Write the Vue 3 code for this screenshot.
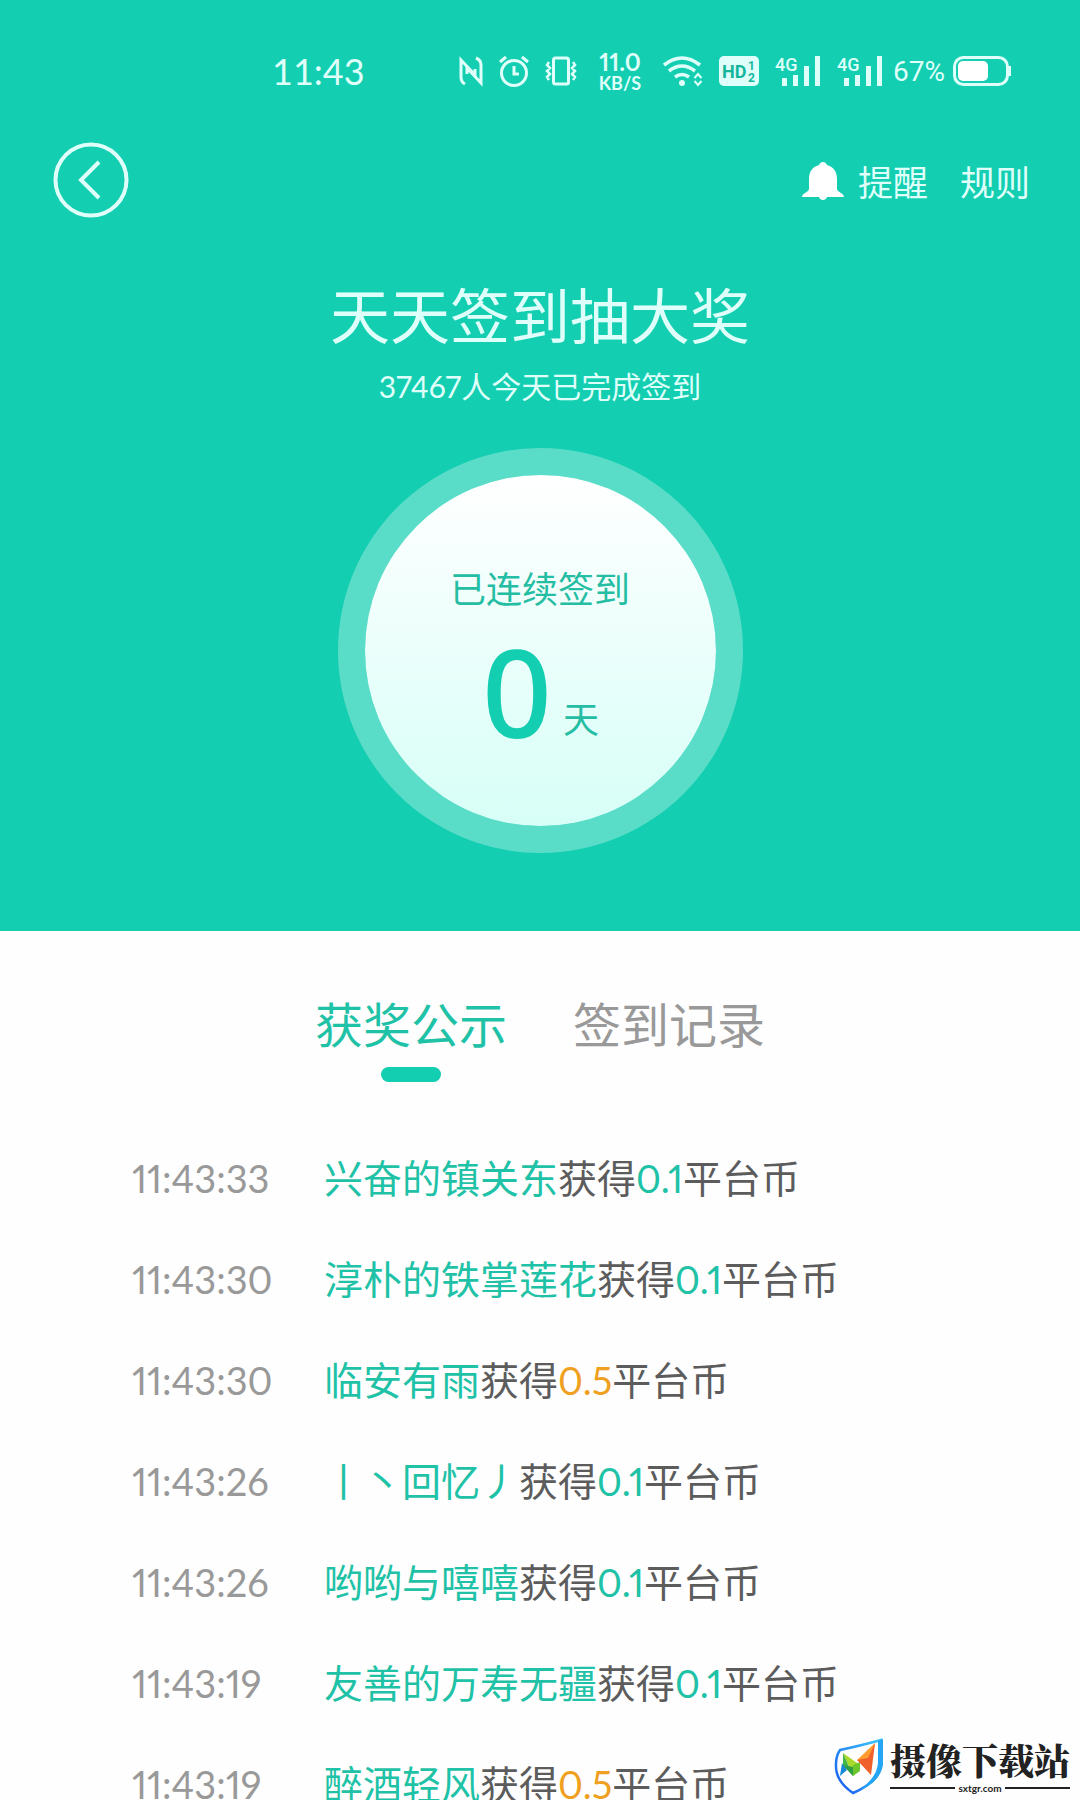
<script setup>
import { ref } from 'vue'

const tabs = ['获奖公示', '签到记录']
const active = ref(0)

const records = [
  { time: '11:43:33', name: '兴奋的镇关东', amount: '0.1' },
  { time: '11:43:30', name: '淳朴的铁掌莲花', amount: '0.1' },
  { time: '11:43:30', name: '临安有雨', amount: '0.5' },
  { time: '11:43:26', name: '丨丶回忆丿', amount: '0.1' },
  { time: '11:43:26', name: '哟哟与嘻嘻', amount: '0.1' },
  { time: '11:43:19', name: '友善的万寿无疆', amount: '0.1' },
  { time: '11:43:19', name: '醉酒轻风', amount: '0.5' },
]
</script>

<template>
  <div class="page">
    <header class="hero">
      <div class="status">
        <time class="clock">11:43</time>
        <div class="indicators">
          <svg width="24" height="32" viewBox="0 0 24 32" fill="none" stroke="currentColor" stroke-width="3">
            <path d="M6 29Q2 27 2 22V5L16 20V14" /><path d="M17 3Q22 5 22 10V28L8 13V19" />
          </svg>
          <svg width="30" height="32" viewBox="0 0 30 32" fill="none" stroke="currentColor" stroke-width="3">
            <circle cx="15" cy="18" r="12.500" /><path d="M15 11v8h5M1 7l6-5M29 7l-6-5" />
          </svg>
          <svg width="32" height="32" viewBox="0 0 32 32" fill="none" stroke="currentColor" stroke-width="3">
            <rect x="8.500" y="3" width="15" height="26" rx="2" />
            <path stroke-width="2.500" d="M4 7l-2 3 3 3-3 3 3 3-3 3 2 3M28 7l2 3-3 3 3 3-3 3 3 3-2 3" />
          </svg>
          <div class="speed"><span>11.0</span><small>KB/S</small></div>
          <svg width="40" height="32" viewBox="0 0 40 32" fill="none" stroke="currentColor" stroke-width="3.500">
            <path d="M1 10Q19-4 37 10M6 16Q19 6 32 16M12 22Q19 17 26 22" />
            <circle cx="19" cy="28" r="3" fill="currentColor" stroke="none" />
            <path d="M31.500 23l3.500-4 3.500 4M31.500 26l3.500 4 3.500-4" stroke-width="2" />
          </svg>
          <svg width="40" height="32" viewBox="0 0 40 32">
            <rect y="1" width="40" height="30" rx="5" fill="currentColor" />
            <text x="3" y="23" class="hd">HD</text>
            <text x="29" y="15" class="hd-num">1</text><text x="29" y="27" class="hd-num">2</text>
          </svg>
          <svg v-for="n in 2" :key="n" width="46" height="32" viewBox="0 0 46 32" fill="currentColor">
            <text x="0" y="16" class="net">4G</text>
            <path d="M7 23h5v8H7zM18 20h5v11h-5zM29 11h5v20h-5zM40 1h5v30h-5z" />
          </svg>
          <div class="power">
            <span>67%</span>
            <svg width="58" height="32" viewBox="0 0 58 32" fill="none" stroke="currentColor">
              <rect x="1.500" y="2.500" width="53" height="27" rx="9" stroke-width="3" />
              <rect x="5" y="6" width="30" height="20" rx="5" fill="#fff" stroke="none" />
              <path d="M57 11v10" stroke-width="2.500" />
            </svg>
          </div>
        </div>
      </div>

      <nav class="bar">
        <button class="back" aria-label="返回">
          <svg width="76" height="76" viewBox="0 0 76 76" fill="none" stroke="currentColor" stroke-width="4">
            <circle cx="38" cy="38" r="35.500" /><path d="M46 20L28 38l18 18" />
          </svg>
        </button>
        <div class="actions">
          <button>
            <svg width="42" height="40" viewBox="0 0 42 40" fill="currentColor">
              <path d="M21 0c2 0 3 1 4 3 7 2 10 7 10 14v10c0 3 7 4 7 8H25c-1 4-7 4-8 0H0c0-4 7-5 7-8V17c0-7 3-12 10-14 1-2 2-3 4-3z" />
            </svg>
            提醒
          </button>
          <button>规则</button>
        </div>
      </nav>

      <h1>天天签到抽大奖</h1>
      <p class="joined">37467人今天已完成签到</p>

      <section class="dial">
        <span>已连续签到</span>
        <p class="count"><strong>0</strong><span>天</span></p>
      </section>
    </header>

    <main>
      <div class="tabs" role="tablist">
        <button
          v-for="(tab, i) in tabs"
          :key="tab"
          role="tab"
          :aria-selected="active === i"
          :class="{ active: active === i }"
          @click="active = i"
        >{{ tab }}</button>
      </div>
      <ul class="records">
        <li v-for="(r, i) in records" :key="i">
          <time>{{ r.time }}</time>
          <p><span class="name">{{ r.name }}</span>获得<span class="amount" :class="{ high: r.amount === '0.5' }">{{ r.amount }}</span>平台币</p>
        </li>
      </ul>
    </main>

    <aside class="brand">
      <svg width="50" height="58" viewBox="0 0 50 58" fill="none">
        <defs>
          <linearGradient id="shield" x1="1" y1="0" x2="0" y2="1">
            <stop offset="0" stop-color="#3cc8fa" /><stop offset="1" stop-color="#1657f0" />
          </linearGradient>
        </defs>
        <path d="M6 12Q25 8 47 2L47 26Q45 44 19 55Q1 43 2 26Q2 18 6 12Z" stroke="url(#shield)" stroke-width="2.500" />
        <path d="M44 3l5-2v26q-3 17-23 25 17-13 18-27z" fill="#25a5f5" />
        <path d="M9 15l17 12-7 11z" fill="#a9d92a" /><path d="M9 15v12l10 11z" fill="#42b649" />
        <path d="M8 25l-2 13 7-6z" fill="#1689d8" />
        <path d="M9 27l10 2v9z" fill="#2f9e45" />
        <path d="M19 38V27l7-3v9z" fill="#6ec52c" />
        <path d="M41 5L23 22l14 3z" fill="#ff9d2e" /><path d="M41 5l-4 32-14-15 11-2z" fill="#f0602a" />
      </svg>
      <div>
        <b>摄像下载站</b>
        <small>sxtgr.com</small>
      </div>
    </aside>
  </div>
</template>

<style>
body {
  margin: 0;
}
</style>

<style scoped>
.page {
  position: relative;
  display: flex;
  flex-direction: column;
  height: 100vh;
  overflow: hidden;
  background: #fefefe;
  color: #5c5c5c;
  font-family: Lato, "Noto Sans CJK SC", sans-serif;
  font-variant-numeric: proportional-nums;
}
h1, p, ul {
  margin: 0;
  padding: 0;
}
svg {
  display: block;
  flex: none;
}
button {
  padding: 0;
  border: 0;
  background: none;
  color: inherit;
  font: inherit;
  cursor: pointer;
}
.hero {
  display: flex;
  flex-direction: column;
  align-items: center;
  flex: none;
  padding: 40px 0 78px;
  background: #13ceb1;
  color: #dffffa;
}
.status {
  display: flex;
  justify-content: space-between;
  align-items: center;
  align-self: stretch;
  height: 62px;
  padding: 0 69px 0 272px;
}
.clock {
  font-size: 36px;
  font-variant-numeric: tabular-nums;
}
.indicators {
  display: flex;
  align-items: center;
  gap: 16px;
}
.speed {
  display: flex;
  flex-direction: column;
  align-items: center;
  width: 54px;
  font-size: 24px;
  font-weight: 700;
  line-height: 24px;
}
.speed small {
  font-size: 18px;
  line-height: 18px;
}
.hd {
  font: 700 18px Roboto, sans-serif;
  fill: #15b59c;
}
.hd-num {
  font: 700 12px/12px Roboto, sans-serif;
  fill: #15b59c;
}
.net {
  font: 500 18px Roboto, sans-serif;
}
.power {
  display: flex;
  align-items: center;
  gap: 8px;
  margin-left: -6px;
  font: 28px Roboto, sans-serif;
}
.bar {
  display: flex;
  justify-content: space-between;
  align-items: center;
  align-self: stretch;
  height: 76px;
  margin-top: 40px;
  padding: 0 50px 0 53px;
}
.actions {
  display: flex;
  gap: 32px;
  padding-top: 4px;
  font-size: 35px;
  line-height: 40px;
}
.actions button {
  display: flex;
  align-items: center;
  gap: 14px;
}
.actions svg {
  color: #fff;
}
h1 {
  margin-top: 60px;
  font-size: 60px;
  font-weight: 400;
  line-height: 76px;
}
.joined {
  margin-top: 12px;
  font-size: 30px;
  line-height: 40px;
}
.dial {
  display: flex;
  flex-direction: column;
  align-items: center;
  box-sizing: border-box;
  width: 405px;
  height: 405px;
  margin-top: 42px;
  padding-top: 88px;
  border: 27px solid rgba(255, 255, 255, 0.3);
  border-radius: 50%;
  background: linear-gradient(#fff, #d7fff7) padding-box;
  color: #25bda3;
  font-size: 36px;
  line-height: 52px;
}
.count {
  display: flex;
  align-items: flex-end;
  gap: 10px;
  margin-top: 4px;
}
.count span {
  padding-bottom: 18px;
}
.count strong {
  color: #13ceb1;
  font-family: "Noto Sans", sans-serif;
  font-size: 122px;
  font-weight: 500;
  line-height: 144px;
}
main {
  flex: 1;
  min-height: 0;
  overflow: hidden;
}
.tabs {
  display: flex;
  justify-content: center;
  gap: 66px;
  padding: 62px 0 45px;
  color: #999;
  font-size: 48px;
  line-height: 64px;
}
.tabs button {
  display: flex;
  flex-direction: column;
  align-items: center;
  gap: 10px;
}
.tabs .active {
  color: #1fc2a6;
}
.tabs .active::after {
  content: "";
  width: 60px;
  height: 15px;
  border-radius: 8px;
  background: #13ceb1;
}
.records {
  list-style: none;
  font-size: 39px;
}
.records li {
  display: flex;
  align-items: center;
  height: 101px;
  padding: 0 132px;
}
.records time {
  flex: none;
  width: 192px;
  color: #999;
  font-size: 38px;
}
.records p {
  line-height: 56px;
  white-space: nowrap;
}
.name,
.amount {
  color: #1fc2a6;
}
.amount {
  font-size: 38px;
}
.amount.high {
  color: #f0a020;
}
.brand {
  position: absolute;
  right: 10px;
  bottom: 4px;
  display: flex;
  align-items: center;
  gap: 6px;
  color: #222;
}
.brand div {
  display: flex;
  flex-direction: column;
}
.brand b {
  font-family: "Noto Serif CJK SC", "Noto Sans CJK SC", serif;
  font-size: 36px;
  font-weight: 900;
  line-height: 42px;
}
.brand small {
  display: flex;
  align-items: center;
  gap: 3px;
  font-size: 10px;
  font-weight: 700;
  line-height: 14px;
}
.brand small::before,
.brand small::after {
  content: "";
  flex: 1;
  height: 2px;
  background: #222;
}
</style>
